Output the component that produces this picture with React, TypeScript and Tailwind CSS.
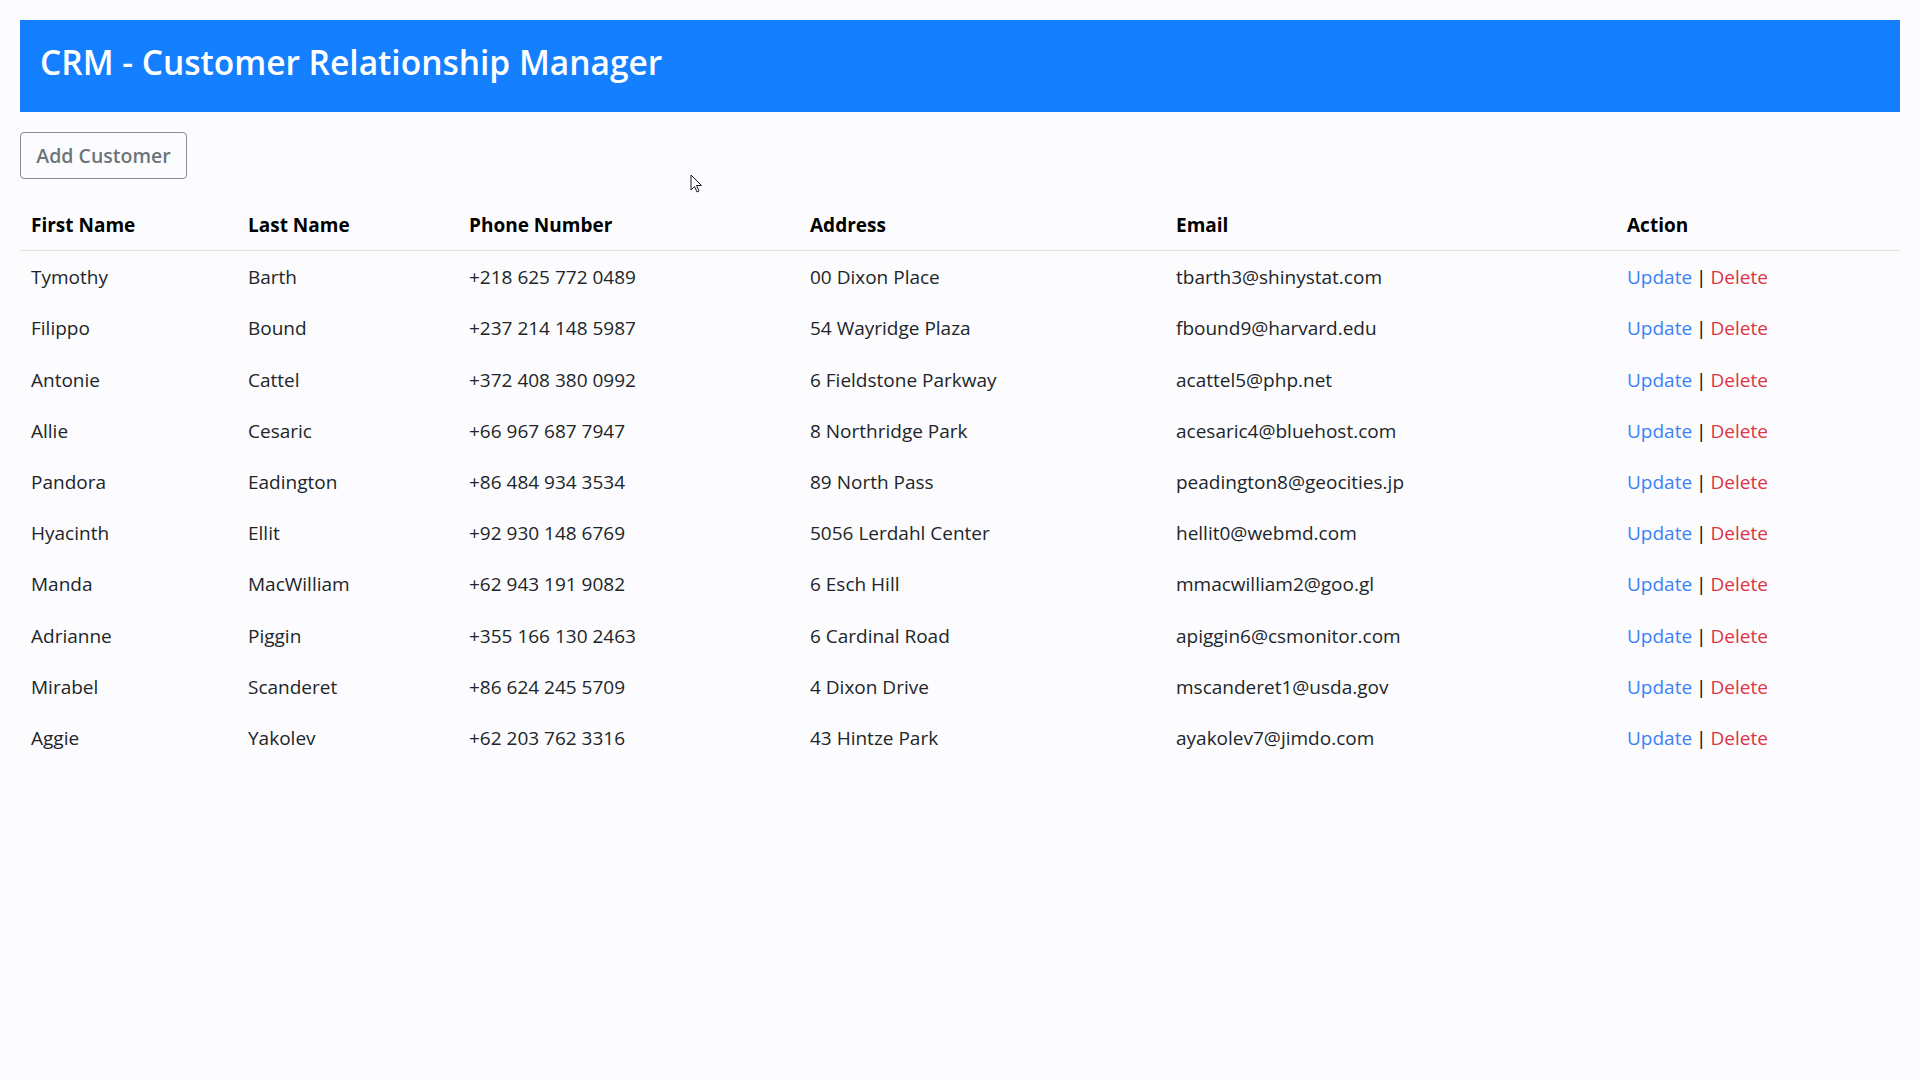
const customers = [
  { first: 'Tymothy', last: 'Barth', phone: '+218 625 772 0489', address: '00 Dixon Place', email: 'tbarth3@shinystat.com' },
  { first: 'Filippo', last: 'Bound', phone: '+237 214 148 5987', address: '54 Wayridge Plaza', email: 'fbound9@harvard.edu' },
  { first: 'Antonie', last: 'Cattel', phone: '+372 408 380 0992', address: '6 Fieldstone Parkway', email: 'acattel5@php.net' },
  { first: 'Allie', last: 'Cesaric', phone: '+66 967 687 7947', address: '8 Northridge Park', email: 'acesaric4@bluehost.com' },
  { first: 'Pandora', last: 'Eadington', phone: '+86 484 934 3534', address: '89 North Pass', email: 'peadington8@geocities.jp' },
  { first: 'Hyacinth', last: 'Ellit', phone: '+92 930 148 6769', address: '5056 Lerdahl Center', email: 'hellit0@webmd.com' },
  { first: 'Manda', last: 'MacWilliam', phone: '+62 943 191 9082', address: '6 Esch Hill', email: 'mmacwilliam2@goo.gl' },
  { first: 'Adrianne', last: 'Piggin', phone: '+355 166 130 2463', address: '6 Cardinal Road', email: 'apiggin6@csmonitor.com' },
  { first: 'Mirabel', last: 'Scanderet', phone: '+86 624 245 5709', address: '4 Dixon Drive', email: 'mscanderet1@usda.gov' },
  { first: 'Aggie', last: 'Yakolev', phone: '+62 203 762 3316', address: '43 Hintze Park', email: 'ayakolev7@jimdo.com' },
]

export default function App() {
  return (
    <div
      className="relative min-h-screen bg-[#fcfcfe] px-5 pt-5 text-[19px] text-[#212529]"
      style={{ fontFamily: '"Open Sans", "Noto Sans", sans-serif' }}
    >
      <div className="flex h-[92px] items-center bg-[#1580ff] px-5 pb-[7px]">
        <h1 className="text-[33.5px] font-semibold text-white">CRM - Customer Relationship Manager</h1>
      </div>

      <button className="mt-5 h-[47px] w-[167px] rounded-[4px] border border-[#8a8a94] text-[19.5px] font-semibold text-[#6c757d]">
        Add Customer
      </button>

      <table className="mt-[20px] w-full border-collapse text-left leading-[27.2px]">
        <thead>
          <tr className="border-b border-[#e2e2d8]">
            <th className="w-[217px] px-[11px] pt-[13px] pb-[11px] font-bold text-black">First Name</th>
            <th className="w-[221px] px-[11px] pt-[13px] pb-[11px] font-bold text-black">Last Name</th>
            <th className="w-[341px] px-[11px] pt-[13px] pb-[11px] font-bold text-black">Phone Number</th>
            <th className="w-[366px] px-[11px] pt-[13px] pb-[11px] font-bold text-black">Address</th>
            <th className="w-[451px] px-[11px] pt-[13px] pb-[11px] font-bold text-black">Email</th>
            <th className="px-[11px] pt-[13px] pb-[11px] font-bold text-black">Action</th>
          </tr>
        </thead>
        <tbody>
          {customers.map((c) => (
            <tr key={c.email}>
              <td className="px-[11px] pt-[13px] pb-[11px]">{c.first}</td>
              <td className="px-[11px] pt-[13px] pb-[11px]">{c.last}</td>
              <td className="px-[11px] pt-[13px] pb-[11px]">{c.phone}</td>
              <td className="px-[11px] pt-[13px] pb-[11px]">{c.address}</td>
              <td className="px-[11px] pt-[13px] pb-[11px]">{c.email}</td>
              <td className="px-[11px] pt-[13px] pb-[11px]">
                <a href="#" className="text-[#3b82f6]">Update</a>
                <span className="mx-[4px] text-black">|</span>
                <a href="#" className="text-[#dc3545]">Delete</a>
              </td>
            </tr>
          ))}
        </tbody>
      </table>

      {/* mouse pointer captured in the screenshot */}
      <svg className="absolute left-[690px] top-[174px]" width="13" height="20" viewBox="0 0 13 20">
        <path d="M1 1 L1 16 L4.5 12.5 L7 18 L9 17 L6.5 11.5 L11.5 11.5 Z" fill="white" stroke="#1a1a2e" strokeWidth="1" strokeLinejoin="miter" />
      </svg>
    </div>
  )
}
